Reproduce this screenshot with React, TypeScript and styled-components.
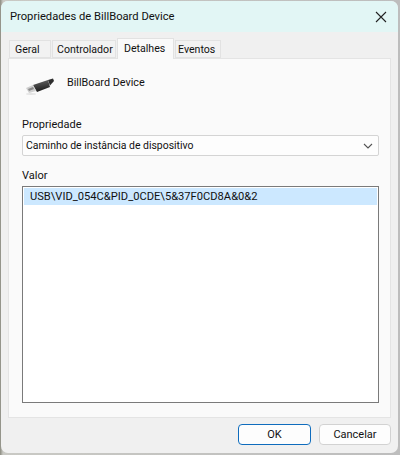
import React from "react";
import styled, { createGlobalStyle } from "styled-components";

const Global = createGlobalStyle`
  html, body { margin: 0; padding: 0; width: 400px; height: 455px; overflow: hidden; background: #b9b9b9; }
  #root { width: 400px; height: 455px; }
  * { box-sizing: border-box; }
`;

const Backdrop = styled.div`
  width: 400px;
  height: 455px;
  padding: 1px 2px 2px 1px;
  background: linear-gradient(90deg, #8b8b80 0, #c9c9c4 3px, #bdbdbd 100%);
  font-family: Roboto, "Liberation Sans", sans-serif;
  font-size: 11px;
  color: #111;
`;

const Win = styled.div`
  width: 397px;
  height: 452px;
  display: flex;
  flex-direction: column;
  border-radius: 7px;
  overflow: hidden;
  background: #f0f0f0;
`;

const TitleBar = styled.div`
  height: 31px;
  flex: none;
  display: flex;
  align-items: center;
  justify-content: space-between;
  padding: 0 11px 0 9px;
  background: #e2f6f5;
  font-size: 11.2px;
`;

const TabStrip = styled.div`
  height: 26px;
  flex: none;
  display: flex;
  align-items: flex-end;
  padding-left: 8px;
  gap: 1px;
`;

const Tab = styled.div<{ $active?: boolean; $w: number; $pad: number }>`
  width: ${(p) => p.$w}px;
  height: ${(p) => (p.$active ? 21 : 18)}px;
  display: flex;
  align-items: center;
  padding-left: ${(p) => p.$pad}px;
  padding-bottom: ${(p) => (p.$active ? 2 : 0)}px;
  font-size: 10.6px;
  background: ${(p) => (p.$active ? "#fafafa" : "#f2f2f2")};
  border: 1px solid #e2e2e2;
  border-bottom: ${(p) => (p.$active ? "none" : "1px solid #e2e2e2")};
  margin-bottom: ${(p) => (p.$active ? "-1px" : "0")};
  position: relative;
  z-index: ${(p) => (p.$active ? 1 : 0)};
`;

const Panel = styled.div`
  margin: 0 7px 0 7px;
  height: 360px;
  flex: none;
  display: flex;
  flex-direction: column;
  padding: 13px 11px 14px 13px;
  background: #fafafa;
  border: 1px solid #e4e4e4;
`;

const DeviceRow = styled.div`
  display: flex;
  gap: 9px;
  height: 44px;
  flex: none;
  padding-left: 2px;
`;

const DeviceName = styled.span`
  padding-top: 2px;
  line-height: 18px;
  font-size: 10.8px;
`;

const Field = styled.label`
  display: block;
  line-height: 18px;
  height: 16px;
`;

const Select = styled.div`
  margin-top: 3px;
  height: 21px;
  flex: none;
  display: flex;
  align-items: center;
  justify-content: space-between;
  padding: 0 5px 0 3px;
  font-size: 10.45px;
  background: #fdfdfd;
  border: 1px solid #d4d4d4;
  border-radius: 2px;
`;

const List = styled.div`
  margin-top: 3px;
  flex: 1;
  padding: 1px;
  background: #fff;
  border: 1px solid #7a7a7a;
`;

const ListRow = styled.div`
  height: 17px;
  line-height: 17px;
  padding-left: 6px;
  font-size: 11.15px;
  background: #cce8ff;
`;

const Spacer = styled.div`
  height: 11px;
  flex: none;
`;

const Footer = styled.div`
  flex: 1;
  display: flex;
  justify-content: flex-end;
  align-items: center;
  gap: 8px;
  padding: 0 7px 3px 0;
`;

const Button = styled.button<{ $primary?: boolean }>`
  width: ${(p) => (p.$primary ? 73 : 72)}px;
  height: 21px;
  padding: 0;
  font: inherit;
  color: inherit;
  background: #fdfdfd;
  border-radius: 4px;
  border: 1px solid ${(p) => (p.$primary ? "#0f6cbd" : "#d2d2d2")};
`;

function UsbPlug() {
  return (
    <svg width="34" height="24" viewBox="0 0 34 24">
      <defs>
        <linearGradient id="b" x1="0" y1="0" x2="0.2" y2="1">
          <stop offset="0" stopColor="#6a6a6a" />
          <stop offset="1" stopColor="#1c1c1c" />
        </linearGradient>
      </defs>
      <path d="M9 13 L24 8 L26 15 L13 20 Z" fill="url(#b)" />
      <path d="M24 8 L29 6.5 L30 9 L26 13.5 Z" fill="#2e2e2e" />
      <path d="M2 16 L9 13 L12 19 L5 21 Z" fill="#cfcfcf" />
      <path d="M4 17 L9 15 L10 17 L5 19 Z" fill="#8a8a8a" />
      <ellipse cx="7" cy="22" rx="5" ry="0.9" fill="#e4e4e4" />
    </svg>
  );
}

export default function App() {
  return (
    <>
      <Global />
      <Backdrop>
        <Win>
          <TitleBar>
            <span>Propriedades de BillBoard Device</span>
            <svg width="12" height="12" viewBox="0 0 12 12">
              <path d="M1 1 L11 11 M11 1 L1 11" stroke="#222" strokeWidth="1.1" fill="none" />
            </svg>
          </TitleBar>
          <TabStrip>
            <Tab $w={42} $pad={5}>Geral</Tab>
            <Tab $w={64} $pad={4}>Controlador</Tab>
            <Tab $w={57} $pad={6} $active>Detalhes</Tab>
            <Tab $w={46} $pad={2}>Eventos</Tab>
          </TabStrip>
          <Panel>
            <DeviceRow>
              <UsbPlug />
              <DeviceName>BillBoard Device</DeviceName>
            </DeviceRow>
            <Field>Propriedade</Field>
            <Select>
              <span>Caminho de instância de dispositivo</span>
              <svg width="10" height="6" viewBox="0 0 10 6">
                <path d="M1 1 L5 5 L9 1" stroke="#555" strokeWidth="1.1" fill="none" />
              </svg>
            </Select>
            <Spacer />
            <Field>Valor</Field>
            <List>
              <ListRow>USB\VID_054C&amp;PID_0CDE\5&amp;37F0CD8A&amp;0&amp;2</ListRow>
            </List>
          </Panel>
          <Footer>
            <Button $primary>OK</Button>
            <Button>Cancelar</Button>
          </Footer>
        </Win>
      </Backdrop>
    </>
  );
}
